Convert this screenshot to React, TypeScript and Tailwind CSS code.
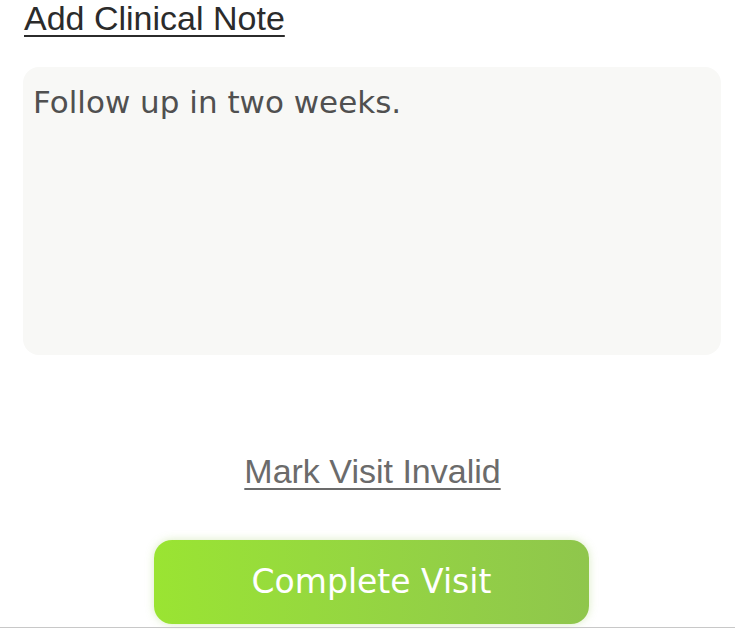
import React from "react";

export default function App() {
  return (
    <div className="w-[735px] h-[629px] bg-white overflow-hidden flex flex-col relative">
      <div className="pl-[24px] pt-0 h-[67px]">
        <span
          className="text-[34px] leading-[36px] text-[#2b2b2b] underline decoration-[2px] underline-offset-[5px]"
          style={{ fontFamily: '"Liberation Sans", Arial, sans-serif' }}
        >
          Add Clinical Note
        </span>
      </div>
      <div
        className="mx-[23px] w-[698px] h-[288px] rounded-[16px] bg-[#f8f8f6] px-[10px] pt-[17px] text-[31px] leading-[36px] text-[#505050]"
        style={{ fontFamily: '"DejaVu Sans", "Noto Sans", sans-serif' }}
      >
        Follow up in two weeks.
      </div>
      <div className="flex justify-center mt-[96px] h-[40px] pl-[10px]">
        <span
          className="text-[34px] leading-[40px] text-[#6b6b6b] underline decoration-[2px] underline-offset-[5px]"
          style={{ fontFamily: '"Liberation Sans", Arial, sans-serif' }}
        >
          Mark Visit Invalid
        </span>
      </div>
      <div className="flex justify-center mt-[49px] pl-[8px]">
        <button
          className="w-[435px] h-[84px] rounded-[18px] bg-gradient-to-r from-[#9ae432] to-[#8fc64c] text-white text-[33px] shadow-[0_0_8px_rgba(150,200,80,0.35)]"
          style={{ fontFamily: '"DejaVu Sans", "Noto Sans", sans-serif' }}
        >
          Complete Visit
        </button>
      </div>
      <div className="absolute left-0 right-0 top-[627px] h-[1px] bg-[#c8c8c8]" />
    </div>
  );
}
